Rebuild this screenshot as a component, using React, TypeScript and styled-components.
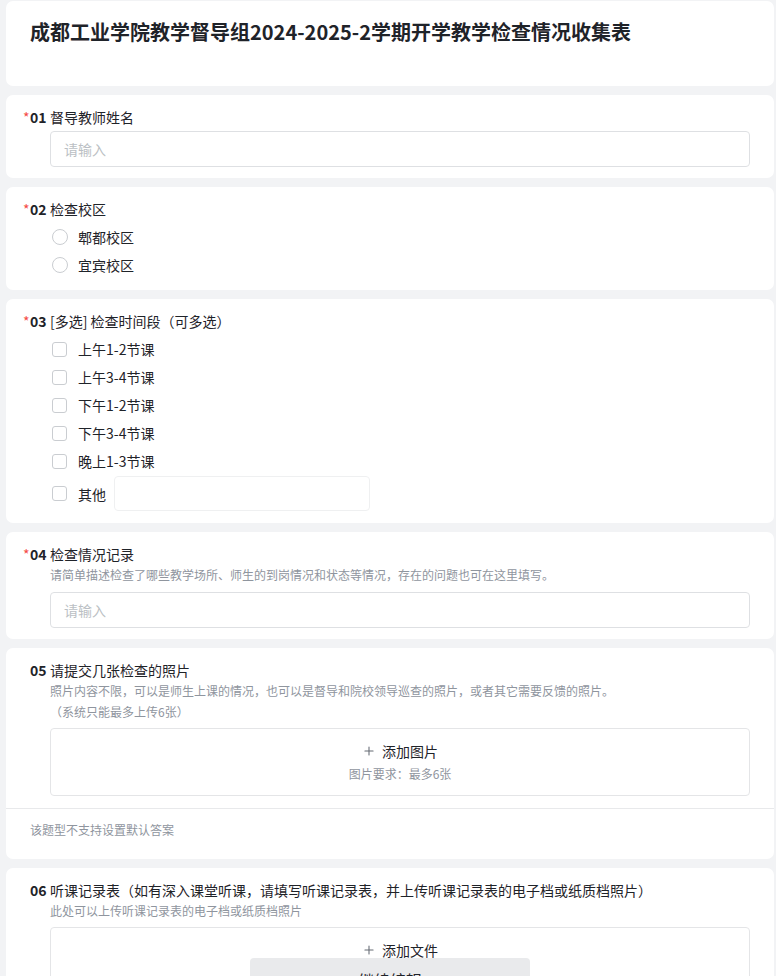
import styled, { createGlobalStyle } from "styled-components";
import { Plus } from "lucide-react";

const GlobalStyle = createGlobalStyle`
  html, body {
    margin: 0;
    padding: 0;
    background: #f2f3f5;
    font-family: "Noto Sans CJK SC", "Noto Sans", sans-serif;
    color: #1f2329;
  }
  * { box-sizing: border-box; }
`;

const Page = styled.div`
  display: flex;
  flex-direction: column;
  gap: 9px;
  padding: 1px 2px 80px 6px;
`;

const Card = styled.div`
  background: #fff;
  border-radius: 7px;
  overflow: hidden;
`;

const HeaderCard = styled(Card)`
  padding: 16px 24px 39px;
`;

const Title = styled.h1`
  margin: 0;
  font-size: 20px;
  line-height: 30px;
  font-weight: 700;
  color: #1f2329;
`;

const QuestionBody = styled.div`
  padding: 11px 24px 11px;
  display: flex;
  flex-direction: column;
`;

const Label = styled.div`
  display: flex;
  align-items: center;
  font-size: 14px;
  line-height: 20px;
  height: 21px;
`;

const Star = styled.span`
  color: #f54a45;
  margin-left: -7px;
  width: 7px;
  font-size: 14px;
`;

const Num = styled.span`
  font-weight: 700;
  width: 20px;
`;

const Desc = styled.div`
  padding-left: 20px;
  font-size: 12px;
  line-height: 21px;
  color: #8f959e;
`;

const Indent = styled.div<{ $top?: number }>`
  padding-left: 20px;
  margin-top: ${(p) => p.$top ?? 4}px;
`;

const TextInput = styled.div`
  height: 36px;
  border: 1px solid #dee0e3;
  border-radius: 4px;
  padding: 0 13px;
  display: flex;
  align-items: center;
  font-size: 14px;
  color: #bbbfc4;
`;

const Option = styled.div`
  display: flex;
  align-items: center;
  height: 28px;
  font-size: 14px;
`;

const OtherOption = styled(Option)`
  height: 37px;
`;

const Radio = styled.span`
  width: 16px;
  height: 16px;
  border-radius: 50%;
  border: 1px solid #cacdd1;
  margin-left: 2px;
  margin-right: 10px;
`;

const Check = styled.span`
  width: 15px;
  height: 15px;
  border-radius: 3px;
  border: 1px solid #cacdd1;
  margin-left: 2px;
  margin-right: 11px;
`;

const OtherInput = styled.div`
  margin-left: 8px;
  width: 256px;
  height: 35px;
  border: 1px solid #eff0f1;
  border-radius: 4px;
`;

const Upload = styled.div<{ $h: number }>`
  height: ${(p) => p.$h}px;
  border: 1px solid #e4e5e7;
  border-radius: 4px;
  display: flex;
  flex-direction: column;
  align-items: center;
  padding-top: 12px;
`;

const UploadAction = styled.div`
  display: flex;
  align-items: center;
  gap: 6px;
  font-size: 14px;
  line-height: 20px;
  color: #1f2329;
  svg { color: #646a73; }
`;

const UploadHint = styled.div`
  margin-top: 3px;
  font-size: 12px;
  line-height: 20px;
  color: #8f959e;
`;

const Footer = styled.div`
  border-top: 1px solid #e8e9eb;
  margin-top: 1px;
  padding: 11px 24px 19px;
  font-size: 12px;
  line-height: 20px;
  color: #8f959e;
`;

const FloatButton = styled.div`
  position: fixed;
  left: 250px;
  bottom: -26px;
  width: 280px;
  height: 44px;
  border-radius: 4px;
  background: #e9eaec;
  display: flex;
  align-items: center;
  justify-content: center;
  font-size: 16px;
  color: #1f2329;
`;

type QProps = { num: string; label: string; required?: boolean };

function QLabel({ num, label, required }: QProps) {
  return (
    <Label>
      {required && <Star>*</Star>}
      <Num>{num}</Num>
      {label}
    </Label>
  );
}

const periods = ["上午1-2节课", "上午3-4节课", "下午1-2节课", "下午3-4节课", "晚上1-3节课"];

export default function App() {
  return (
    <>
      <GlobalStyle />
      <Page>
        <HeaderCard>
          <Title>成都工业学院教学督导组2024-2025-2学期开学教学检查情况收集表</Title>
        </HeaderCard>

        <Card>
          <QuestionBody>
            <QLabel required num="01" label="督导教师姓名" />
            <Indent>
              <TextInput>请输入</TextInput>
            </Indent>
          </QuestionBody>
        </Card>

        <Card>
          <QuestionBody>
            <QLabel required num="02" label="检查校区" />
            <Indent>
              <Option><Radio />郫都校区</Option>
              <Option><Radio />宜宾校区</Option>
            </Indent>
          </QuestionBody>
        </Card>

        <Card>
          <QuestionBody>
            <QLabel required num="03" label="[多选] 检查时间段（可多选）" />
            <Indent>
              {periods.map((p) => (
                <Option key={p}><Check />{p}</Option>
              ))}
              <OtherOption><Check />其他<OtherInput /></OtherOption>
            </Indent>
          </QuestionBody>
        </Card>

        <Card>
          <QuestionBody>
            <QLabel required num="04" label="检查情况记录" />
            <Desc>请简单描述检查了哪些教学场所、师生的到岗情况和状态等情况，存在的问题也可在这里填写。</Desc>
            <Indent $top={7}>
              <TextInput>请输入</TextInput>
            </Indent>
          </QuestionBody>
        </Card>

        <Card>
          <QuestionBody>
            <QLabel num="05" label="请提交几张检查的照片" />
            <Desc>照片内容不限，可以是师生上课的情况，也可以是督导和院校领导巡查的照片，或者其它需要反馈的照片。</Desc>
            <Desc>（系统只能最多上传6张）</Desc>
            <Indent $top={6}>
              <Upload $h={68}>
                <UploadAction><Plus size={14} strokeWidth={1.8} />添加图片</UploadAction>
                <UploadHint>图片要求：最多6张</UploadHint>
              </Upload>
            </Indent>
          </QuestionBody>
          <Footer>该题型不支持设置默认答案</Footer>
        </Card>

        <Card>
          <QuestionBody>
            <QLabel num="06" label="听课记录表（如有深入课堂听课，请填写听课记录表，并上传听课记录表的电子档或纸质档照片）" />
            <Desc>此处可以上传听课记录表的电子档或纸质档照片</Desc>
            <Indent $top={6}>
              <Upload $h={68}>
                <UploadAction><Plus size={14} strokeWidth={1.8} />添加文件</UploadAction>
              </Upload>
            </Indent>
          </QuestionBody>
        </Card>
      </Page>
      <FloatButton>继续编辑</FloatButton>
    </>
  );
}
